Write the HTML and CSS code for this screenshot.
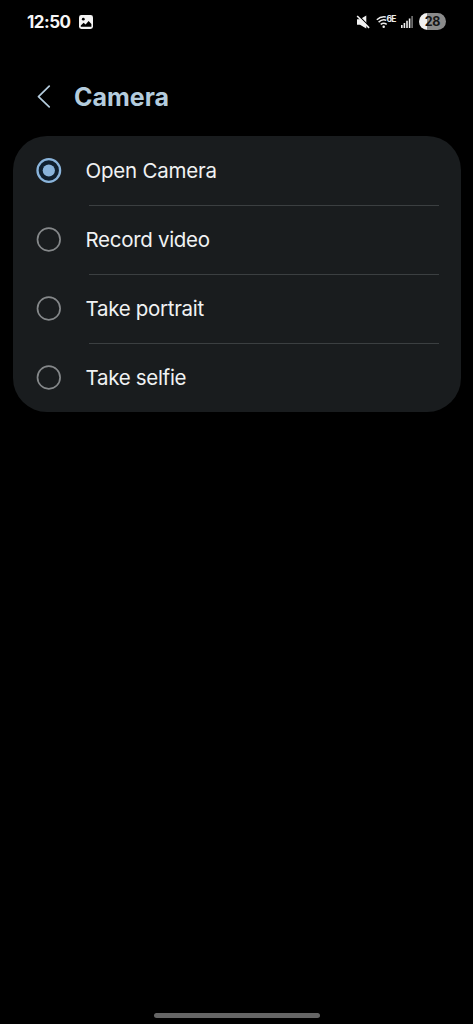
FILE: index.html
```html
<!DOCTYPE html>
<html lang="en">
<head>
<meta charset="utf-8">
<title>Camera</title>
<link rel="stylesheet" href="styles.css">
</head>
<body>
<div class="screen">
  <div class="status">
    <span class="clock">12:50</span>
    <svg class="picture" width="14" height="14" viewBox="0 0 14 14">
      <rect width="14" height="14" rx="2.4" fill="#f4f4f4"/>
      <circle cx="4.3" cy="4.2" r="1.4" fill="#000"/>
      <path d="M1.8 10.6 4.6 7.7l2 1.8 3-3.6 2.8 3v2.8H1.8z" fill="#000"/>
    </svg>
    <div class="indicators">
      <svg class="mute" width="14" height="14" viewBox="0 0 14 14">
        <path d="M1 4.3h3L10.3.5v12.9L4 9.7H1z" fill="#f2f2f2"/>
        <path d="M2.1.2 13.8 11.9" stroke="#000" stroke-width="1.3"/>
        <path d="M1.2 1 13.1 12.9" stroke="#f2f2f2" stroke-width="1.6"/>
      </svg>
      <svg class="wifi" width="21" height="14" viewBox="0 0 21 14">
        <g fill="none" stroke="#eee" stroke-width="1.5">
          <path d="M.8 4.7Q4.8 1.1 9.8 2"/>
          <path d="M2.6 7.1Q6.7 3.6 10.3 5.4"/>
          <path d="M4.7 9.4Q7.7 7.1 10.7 9.4"/>
        </g>
        <circle cx="7.7" cy="11.7" r="1.25" fill="#eee"/>
        <text class="band" x="10.4" y="6.8">6E</text>
      </svg>
      <svg class="signal" width="12" height="12" viewBox="0 0 12 12">
        <path d="M0 9h1.6v3H0zM2.6 7h1.6v5H2.6zM5.2 4.8h1.6V12H5.2zM7.8 2.5h1.6V12H7.8z" fill="#eee"/>
        <path d="M10.3 0h1.6v12h-1.6z" fill="#777"/>
      </svg>
      <span class="battery">28</span>
    </div>
  </div>
  <header class="header">
    <svg class="back" width="14" height="24" viewBox="0 0 14 24">
      <path d="M12.2 1.2 1.5 11.7l10.7 10.1" fill="none" stroke="#b4ccdd" stroke-width="1.7" stroke-linecap="round" stroke-linejoin="round"/>
    </svg>
    <h1 class="title">Camera</h1>
  </header>
  <main class="card">
    <div class="row">
      <svg class="radio selected" width="26" height="26" viewBox="0 0 26 26"><circle class="ring" cx="12.8" cy="12.5" r="11.3"/><circle class="dot" cx="12.8" cy="12.5" r="6.1"/></svg>
      <span class="label">Open Camera</span>
    </div>
    <div class="row">
      <svg class="radio" width="26" height="26" viewBox="0 0 26 26"><circle class="ring" cx="12.8" cy="12.5" r="11.3"/></svg>
      <span class="label tight">Record video</span>
    </div>
    <div class="row">
      <svg class="radio" width="26" height="26" viewBox="0 0 26 26"><circle class="ring" cx="12.8" cy="12.5" r="11.3"/></svg>
      <span class="label tight">Take portrait</span>
    </div>
    <div class="row">
      <svg class="radio" width="26" height="26" viewBox="0 0 26 26"><circle class="ring" cx="12.8" cy="12.5" r="11.3"/></svg>
      <span class="label tight">Take selfie</span>
    </div>
  </main>
  <div class="handle"></div>
</div>
</body>
</html>
```
FILE: styles.css
```css
body {
  margin: 0;
  background: #000;
  font-family: Inter, "Liberation Sans", sans-serif;
}
.screen {
  box-sizing: border-box;
  width: 473px;
  height: 1024px;
  display: flex;
  flex-direction: column;
  overflow: hidden;
}
.status {
  display: flex;
  align-items: center;
  height: 43px;
  padding: 0 27px;
}
.clock {
  width: 52px;
  font-size: 17px;
  font-weight: 700;
  line-height: 20px;
  letter-spacing: -0.5px;
  color: #f7f7f7;
}
.indicators {
  display: flex;
  align-items: center;
  margin-left: auto;
}
.wifi {
  margin-left: 6px;
  overflow: visible;
}
.band {
  font-size: 8.5px;
  font-weight: 700;
  letter-spacing: -0.7px;
  fill: #eee;
}
.signal {
  margin-left: 4px;
}
.battery {
  width: 27px;
  height: 17px;
  margin-left: 6px;
  border-radius: 9px;
  background: linear-gradient(90deg, #f0f0f0 0 8px, #8b8b8b 8px);
  color: #161616;
  font-size: 12.5px;
  font-weight: 700;
  letter-spacing: -0.3px;
  line-height: 17px;
  text-align: center;
}
.header {
  display: flex;
  align-items: center;
  height: 93px;
  padding-left: 37px;
  box-sizing: border-box;
  padding-top: 14px;
}
.title {
  margin: 0 0 0 23px;
  font-size: 25px;
  line-height: 30px;
  font-weight: 700;
  color: #b4ccdd;
}
.card {
  width: 448.5px;
  margin-left: 12.5px;
  border-radius: 34px;
  background: #191c1e;
}
.row {
  position: relative;
  display: flex;
  align-items: center;
  height: 69px;
  padding-left: 23px;
}
.row + .row::before {
  content: "";
  position: absolute;
  top: 0;
  left: 76.5px;
  right: 22px;
  height: 1px;
  background: #3b3f41;
}
.radio {
  flex: none;
}
.ring {
  fill: none;
  stroke: #85888a;
  stroke-width: 1.7;
}
.selected .ring {
  fill: #10202f;
  stroke: #8ab4db;
  stroke-width: 2.3;
}
.dot {
  fill: #8ab4db;
}
.label {
  margin-left: 24px;
  padding-top: 1px;
  font-size: 20.5px;
  line-height: 28px;
  letter-spacing: -0.22px;
  color: #f0f2f3;
}
.tight {
  letter-spacing: -0.3px;
}
.handle {
  width: 166px;
  height: 5px;
  margin: auto auto 6px 154px;
  border-radius: 3px;
  background: #656565;
}
```
